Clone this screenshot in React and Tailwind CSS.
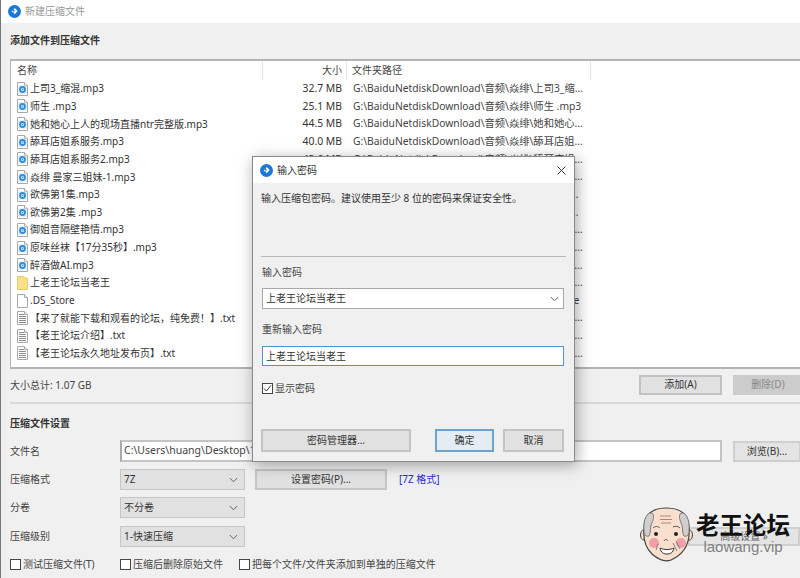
import React from "react";

const F = { fontFamily: '"Noto Sans","Noto Sans CJK SC",sans-serif' };
const base = "G:\\BaiduNetdiskDownload\\音频\\焱绯\\";
const rows = [
  ["mp3", "上司3_缩混.mp3", "32.7 MB", base + "上司3_缩..."],
  ["mp3", "师生 .mp3", "25.1 MB", base + "师生 .mp3"],
  ["mp3", "她和她心上人的现场直播ntr完整版.mp3", "44.5 MB", base + "她和她心..."],
  ["mp3", "舔耳店姐系服务.mp3", "40.0 MB", base + "舔耳店姐..."],
  ["mp3", "舔耳店姐系服务2.mp3", "43.6 MB", base + "舔耳店姐..."],
  ["mp3", "焱绯 曼家三姐妹-1.mp3", "31.3 MB", base + "曼家三姐..."],
  ["mp3", "欲佛第1集.mp3", "28.4 MB", base + "欲佛第1..."],
  ["mp3", "欲佛第2集 .mp3", "26.9 MB", base + "欲佛第2..."],
  ["mp3", "御姐音隔壁艳情.mp3", "30.2 MB", base + "御姐音隔..."],
  ["mp3", "原味丝袜【17分35秒】.mp3", "24.0 MB", base + "原味丝袜..."],
  ["mp3", "醉酒做AI.mp3", "29.5 MB", base + "醉酒做AI..."],
  ["folder", "上老王论坛当老王", "", base + "上老王论..."],
  ["file", ".DS_Store", "6 KB", base + ".DS_Store"],
  ["txt", "【来了就能下载和观看的论坛，纯免费！】.txt", "1 KB", base + "【来了就..."],
  ["txt", "【老王论坛介绍】.txt", "1 KB", base + "【老王论..."],
  ["txt", "【老王论坛永久地址发布页】.txt", "1 KB", base + "【老王论..."],
];

function AppIcon() {
  return (
    <svg width="13" height="13" viewBox="0 0 13 13" className="shrink-0">
      <circle cx="6.5" cy="6.5" r="6.5" fill="#1a78d6" />
      <path d="M6.8 3 L9.6 6 L6.8 9.2 L5.4 7.6 L7 6 L5.6 4.4 Z" fill="#fff" />
      <path d="M4.6 5.4 L5.8 6.6 L4.8 7.6 L3.6 6.5 Z" fill="#fff" />
    </svg>
  );
}

function FileIcon({ type }) {
  if (type === "folder")
    return (
      <svg width="11" height="14" viewBox="0 0 11 14" className="shrink-0">
        <path d="M0.5 0.5 H6.5 L7.5 2 H10.5 V13.5 H0.5 Z" fill="#fbdf8a" stroke="#eccb6c" />
      </svg>
    );
  return (
    <svg width="11" height="14" viewBox="0 0 11 14" className="shrink-0">
      <path d="M0.5 0.5 H7.5 L10.5 3.5 V13.5 H0.5 Z" fill="#fff" stroke="#a9a9a9" />
      <path d="M7.5 0.5 V3.5 H10.5" fill="#eee" stroke="#a9a9a9" />
      {type === "mp3" && (
        <>
          <rect x="1.5" y="3.5" width="8" height="8" fill="#d6e8f7" />
          <circle cx="5.5" cy="7.5" r="3.4" fill="#2f8fdc" />
          <circle cx="5.5" cy="7.5" r="1.5" fill="#e8f3fb" />
          <circle cx="5.5" cy="7.5" r="0.7" fill="#2f8fdc" />
        </>
      )}
      {type === "txt" && (
        <path d="M2 3.5 H7 M2 5.5 H9 M2 7.5 H9 M2 9.5 H9 M2 11.5 H9" stroke="#8c8c8c" strokeWidth="1" />
      )}
    </svg>
  );
}

function Chevron() {
  return (
    <svg width="9" height="6" viewBox="0 0 9 6" className="shrink-0">
      <path d="M0.8 1 L4.5 4.8 L8.2 1" fill="none" stroke="#666" strokeWidth="1" />
    </svg>
  );
}

function Box({ checked }) {
  return (
    <span className="w-[11px] h-[11px] border border-[#444] bg-white flex items-center justify-center shrink-0">
      {checked && (
        <svg width="9" height="9" viewBox="0 0 9 9">
          <path d="M1 4.5 L3.4 7 L8 1.4" fill="none" stroke="#333" strokeWidth="1" />
        </svg>
      )}
    </span>
  );
}

function Select({ children }) {
  return (
    <div className="w-[125px] h-[21px] bg-[#e1e1e1] border border-[#c6c6c6] flex items-center justify-between pl-[3px] pr-[3px] text-[10px] text-[#333]">
      <span>{children}</span>
      <span className="mr-[3px]"><Chevron /></span>
    </div>
  );
}

function Btn({ className, children }) {
  return (
    <div className={"flex items-center justify-center shrink-0 border-2 text-[10px] text-[#333] " + className}>{children}</div>
  );
}

function Label({ children }) {
  return <div className="w-[110px] shrink-0 text-[10px] text-[#444]">{children}</div>;
}

function Check({ className, children }) {
  return (
    <div className={"flex items-center gap-[2px] text-[10px] text-[#444] " + className}>
      <Box />
      <span>{children}</span>
    </div>
  );
}

function Face() {
  return (
    <svg width="54" height="55" viewBox="0 0 54 55" className="shrink-0">
      <ellipse cx="3.5" cy="28" rx="3" ry="5" fill="#f7dccb" stroke="#444" />
      <ellipse cx="49.5" cy="28" rx="3" ry="5" fill="#f7dccb" stroke="#444" />
      <path d="M4 22 C4 6 14 1 26 1 C40 1 49 6 49 22 C50 36 44 47 31 53 C26 55 19 53 12 47 C6 41 3 32 4 22 Z" fill="#f8dfce" stroke="#444" strokeWidth="1.2" />
      <path d="M4 24 C3 12 7 5 12 6 C15 8 13 14 11 18 C10 22 11 26 9 29 C6 30 4 28 4 24 Z" fill="#cfcfcf" stroke="#666" strokeWidth="0.8" />
      <path d="M49 24 C50 12 46 5 41 6 C38 8 40 14 42 18 C43 22 42 26 44 29 C47 30 49 28 49 24 Z" fill="#cfcfcf" stroke="#666" strokeWidth="0.8" />
      <path d="M20 9 H31 M20 12.5 H32 M21 16 H31" stroke="#b08a70" strokeWidth="1" fill="none" />
      <path d="M13 21 C15 19 18 19 20 21 M33 20 C35 19 38 19 40 21" stroke="#555" strokeWidth="1" fill="none" />
      <circle cx="16" cy="27" r="2" fill="#222" />
      <circle cx="36" cy="27" r="2" fill="#222" />
      <circle cx="14" cy="36" r="5" fill="#f2a0a8" />
      <circle cx="41" cy="36" r="5" fill="#f2a0a8" />
      <path d="M24 34 C25 32 27 32 28 34" stroke="#555" fill="none" />
      <path d="M20 41 C24 43 30 43 34 41 C33 46 30 47 27 47 C24 47 21 46 20 41 Z" fill="#fff" stroke="#333" />
      <path d="M33 36 L37 44 M36 34 L40 42 M18 37 L16 43" stroke="#666" strokeWidth="0.8" fill="none" />
    </svg>
  );
}

export default function App() {
  return (
    <div style={F} className="relative w-[800px] h-[578px] overflow-hidden bg-[#f0f0f0] border-l border-[#777]">
      <div className="h-[23px] bg-white flex items-center gap-[4px] pl-[7px] pb-[1px] text-[10px] text-[#999]">
        <AppIcon />
        <span>新建压缩文件</span>
      </div>

      <div className="h-[36px] pl-[9px] pt-[9px] text-[10px] leading-[16px] font-bold text-[#333]">添加文件到压缩文件</div>

      <div className="ml-[9px] h-[310px] bg-white border-l border-t-2 border-b-2 border-[#b4b4b4]">
        <div className="h-[19px] flex items-center text-[10px] text-[#444]">
          <div className="w-[252px] h-full pl-[6px] flex items-center border-r border-[#e6e6e6]">名称</div>
          <div className="w-[84px] h-full pr-[4px] flex items-center justify-end border-r border-[#e6e6e6]">大小</div>
          <div className="w-[244px] h-full pl-[5px] flex items-center border-r border-[#e6e6e6]">文件夹路径</div>
        </div>
        <div className="flex flex-col">
          {rows.map((r, i) => (
            <div key={i} className="h-[17.65px] flex items-center text-[10px] text-[#333] whitespace-nowrap">
              <div className="w-[252px] pl-[6px] flex items-center gap-[2px]">
                <FileIcon type={r[0]} />
                <span>{r[1]}</span>
              </div>
              <div className="w-[84px] pr-[5px] text-right text-[10.4px]">{r[2]}</div>
              <div className="w-[244px] pl-[6px] text-[#444] text-[10.3px] overflow-hidden">{r[3]}</div>
            </div>
          ))}
        </div>
      </div>

      <div className="h-[35px] ml-[9px] flex items-center border-b-2 border-[#d8d8d8] text-[10px] text-[#444]">
        <span className="w-[629px] shrink-0">大小总计: 1.07 GB</span>
        <Btn className="w-[83px] h-[20px] mb-[2px] bg-[#e1e1e1] border-[#c2c2c2] border">添加(A)</Btn>
        <Btn className="w-[70px] h-[20px] mb-[2px] ml-[11px] bg-[#cccccc] border-[#cccccc] text-[#888]">删除(D)</Btn>
      </div>

      <div className="pl-[9px] pt-[11px] h-[36px] text-[10px] leading-[16px] font-bold text-[#333]">压缩文件设置</div>

      <div className="flex flex-col pl-[9px]">
        <div className="flex items-center h-[22px]">
          <Label>文件名</Label>
          <div className="w-[602px] h-[22px] shrink-0 bg-white border-2 border-[#c4c4c4] border-l-[#aaa] pl-[2px] text-[10.5px] leading-[17px] text-[#444] whitespace-nowrap">C:\Users\huang\Desktop\111.7z</div>
          <Btn className="w-[68px] h-[21px] ml-[11px] bg-[#e4e4e4] border-[#cfcfcf] border">浏览(B)...</Btn>
        </div>
        <div className="flex items-center h-[21px] mt-[7px]">
          <Label>压缩格式</Label>
          <Select>7Z</Select>
          <Btn className="w-[132px] h-[21px] ml-[10px] bg-[#e1e1e1] border-[#c6c6c6] border">设置密码(P)...</Btn>
          <span className="ml-[12px] text-[10px] text-[#2a2ad0]">[7Z 格式]</span>
        </div>
        <div className="flex items-center h-[21px] mt-[7px]">
          <Label>分卷</Label>
          <Select>不分卷</Select>
        </div>
        <div className="flex items-center h-[21px] mt-[8px]">
          <Label>压缩级别</Label>
          <Select>1-快速压缩</Select>
          <Btn className="w-[112px] h-[19px] ml-[443px] bg-[#e4e4e4] border-[#cfcfcf] border text-[#666]">高级设置 »</Btn>
        </div>
        <div className="flex items-center h-[14px] mt-[10px]">
          <Check className="w-[110px]">测试压缩文件(T)</Check>
          <Check className="w-[119px]">压缩后删除原始文件</Check>
          <Check>把每个文件/文件夹添加到单独的压缩文件</Check>
        </div>
      </div>

      {/* Dialog */}
      <div className="absolute left-[251px] top-[156px] w-[323px] h-[306px] bg-[#f0f0f0] border border-[#8a8a8a] shadow-[2px_3px_14px_rgba(0,0,0,0.35)] flex flex-col">
        <div className="h-[26px] shrink-0 bg-white flex items-center pl-[7px] pr-[8px] gap-[4px] text-[10px] text-[#333]">
          <AppIcon />
          <span className="flex-1">输入密码</span>
          <svg width="9" height="9" viewBox="0 0 9 9">
            <path d="M0.5 0.5 L8.5 8.5 M8.5 0.5 L0.5 8.5" stroke="#333" strokeWidth="1" />
          </svg>
        </div>
        <div className="px-[8px] pt-[7px] flex flex-col text-[10px] text-[#333]">
          <div className="h-[16px] leading-[16px]">输入压缩包密码。建议使用至少 8 位的密码来保证安全性。</div>
          <div className="h-px bg-[#b8b8b8] mt-[50px]" />
          <div className="mt-[7px] ml-[1px] h-[16px] leading-[16px] text-[#444]">输入密码</div>
          <div className="mt-[8px] ml-[1px] w-[302px] h-[21px] bg-white border border-[#a8a8a8] flex items-center justify-between pl-[3px] pr-[4px]">
            <span>上老王论坛当老王</span>
            <Chevron />
          </div>
          <div className="mt-[12px] ml-[1px] h-[16px] leading-[16px] text-[#444]">重新输入密码</div>
          <div className="mt-[9px] ml-[1px] w-[302px] h-[20px] bg-white border border-[#4d95c8] flex items-center pl-[3px]">上老王论坛当老王</div>
          <div className="mt-[15px] ml-[1px] flex items-center gap-[2px] h-[14px] text-[#444]">
            <Box checked />
            <span>显示密码</span>
          </div>
          <div className="mt-[34px] flex items-center">
            <Btn className="w-[150px] h-[23px] bg-[#e1e1e1] border-[#c4c4c4]">密码管理器...</Btn>
            <Btn className="w-[59px] h-[23px] ml-[24px] bg-[#e4edf4] border-[#6ea3cf]">确定</Btn>
            <Btn className="w-[61px] h-[23px] ml-[9px] bg-[#e1e1e1] border-[#c4c4c4]">取消</Btn>
          </div>
        </div>
      </div>

      {/* Watermark */}
      <div className="absolute left-[639px] top-[507px] flex items-start gap-[2px]">
        <Face />
        <div className="flex flex-col items-center pt-[4px]">
          <span className="text-[23.5px] leading-[28px] font-bold text-[#111] whitespace-nowrap">老王论坛</span>
          <span style={{ fontFamily: '"Liberation Sans",sans-serif' }} className="text-[15px] leading-[16px] text-[#808080]">laowang.vip</span>
        </div>
      </div>
    </div>
  );
}
